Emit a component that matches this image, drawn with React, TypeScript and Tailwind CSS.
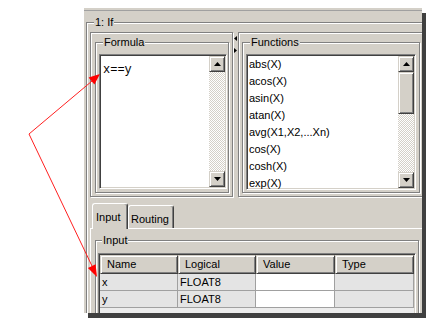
import * as React from "react";

const ETCH = "border border-[#808080] shadow-[inset_1px_1px_0_#ffffff,1px_1px_0_#ffffff]";
const SUNKEN =
  "border border-t-[#808080] border-l-[#808080] border-r-white border-b-white shadow-[inset_1px_1px_0_#404040,inset_-1px_-1px_0_#d4d0c8]";
const RAISED =
  "border border-t-[#d4d0c8] border-l-[#d4d0c8] border-r-[#404040] border-b-[#404040] shadow-[inset_1px_1px_0_#ffffff,inset_-1px_-1px_0_#808080]";
const DITHER = "bg-[image:repeating-conic-gradient(#d4d0c8_0%_25%,#ffffff_0%_50%)] bg-[length:2px_2px]";

const FUNCTIONS = ["abs(X)", "acos(X)", "asin(X)", "atan(X)", "avg(X1,X2,...Xn)", "cos(X)", "cosh(X)", "exp(X)"];

function Group({
  title,
  className = "",
  children
}: {
  title: string;
  className?: string;
  children?: React.ReactNode;
}) {
  return (
    <fieldset className={[ETCH, "min-w-0", className].join(" ")}>
      <legend className="ml-[4px] bg-[#d4d0c8] px-[1px] leading-[13px]">{title}</legend>
      {children}
    </fieldset>
  );
}

function Arrow({ dir }: { dir: "up" | "down" }) {
  return (
    <svg width="7" height="4" viewBox="0 0 7 4" aria-hidden="true">
      <polygon points={dir === "up" ? "0,4 3.5,0 7,4" : "0,0 3.5,4 7,0"} fill="#000" />
    </svg>
  );
}

function ScrollButton({ dir }: { dir: "up" | "down" }) {
  return (
    <div className={["grid h-[16px] w-[16px] shrink-0 place-items-center bg-[#d4d0c8]", RAISED].join(" ")}>
      <Arrow dir={dir} />
    </div>
  );
}

function Scrollbar({ thumb }: { thumb?: boolean }) {
  return (
    <div className="flex w-[16px] flex-col">
      <ScrollButton dir="up" />
      {thumb && <div className={["h-[42px] bg-[#d4d0c8]", RAISED].join(" ")} />}
      <div className={["flex-1", DITHER].join(" ")} />
      <ScrollButton dir="down" />
    </div>
  );
}

function Tab({ label, active }: { label: string; active?: boolean }) {
  return (
    <div
      className={[
        "relative rounded-t-[3px] border-l border-t border-r border-l-white border-t-white border-r-[#404040] bg-[#d4d0c8] shadow-[inset_-1px_0_0_#808080]",
        active ? "z-10 -mb-px h-[26px] w-[36px] pl-[3px] pt-[5px]" : "h-[23px] w-[46px] pl-[2px] pt-[5px]"
      ].join(" ")}
    >
      {label}
    </div>
  );
}

function Cell({ children, white, w }: { children?: React.ReactNode; white?: boolean; w: string }) {
  return (
    <div
      className={[
        "h-[17px] border-b border-r border-[#a0a0a0] pl-[2px] leading-[16px]",
        white ? "bg-white" : "bg-[#e4e4e4]",
        w
      ].join(" ")}
    >
      {children}
    </div>
  );
}

function Head({ children, w }: { children: React.ReactNode; w: string }) {
  return <div className={["h-[19px] bg-[#d4d0c8] pl-[6px] leading-[16px]", RAISED, w].join(" ")}>{children}</div>;
}

function RedArrows() {
  return (
    <svg className="pointer-events-none absolute left-0 top-0" width="437" height="325" aria-hidden="true">
      <path d="M29 134 L92 81 M29 134 L92 266" stroke="#ff2020" strokeWidth="1" fill="none" />
      <polygon points="100,74 94.4,84.6 88.6,77.5" fill="#ff0000" />
      <polygon points="97,277 95.6,264.3 87.9,268" fill="#ff0000" />
    </svg>
  );
}

export default function App() {
  return (
    <div className="relative h-[325px] w-[437px] overflow-hidden bg-white font-['Liberation_Sans',Arial,sans-serif] text-[11px] text-black">
      <div className="ml-[84px] mt-[8px] h-[305px] w-[338px] overflow-hidden bg-[#d4d0c8] shadow-[4px_5px_0_#404040]">
        <div className="h-[3px] border-b border-[#a0a0a0]" />
        <Group title="1: If" className="ml-[2px] mt-[5px] h-[340px] w-[360px] pl-[3px] pt-[3px]">
          <div className="flex items-start">
            {/* formula editor */}
            <div className={[ETCH, "h-[165px] w-[143px] pl-[4px] pt-[3px]"].join(" ")}>
              <Group title="Formula" className="h-[157px] w-[134px] pl-[3px] pt-[5px]">
                <div className={[SUNKEN, "flex h-[135px] w-[128px] bg-white p-[1px]"].join(" ")}>
                  <div className="flex-1 pl-[2px] pt-[7px] [font-family:'Liberation_Mono','Courier_New',monospace] text-[12px] leading-[14px]">
                    x==y
                  </div>
                  <Scrollbar />
                </div>
              </Group>
            </div>

            {/* splitter */}
            <div className="flex w-[5px] flex-col items-center pt-[4px]">
              <svg width="3" height="5" viewBox="0 0 3 5" aria-hidden="true">
                <polygon points="3,0 0,2.5 3,5" fill="#000" />
              </svg>
              <svg className="mt-[7px]" width="3" height="5" viewBox="0 0 3 5" aria-hidden="true">
                <polygon points="0,0 3,2.5 0,5" fill="#000" />
              </svg>
            </div>

            {/* function list */}
            <div className={[ETCH, "h-[165px] w-[186px] pl-[3px] pt-[3px]"].join(" ")}>
              <Group title="Functions" className="h-[157px] w-[178px] pl-[3px] pt-[5px]">
                <div className={[SUNKEN, "flex h-[136px] w-[170px] bg-white p-[1px]"].join(" ")}>
                  <ul className="flex-1">
                    {FUNCTIONS.map((f) => (
                      <li key={f} className="h-[17px] pl-[1px] leading-[17px]">
                        {f}
                      </li>
                    ))}
                  </ul>
                  <Scrollbar thumb />
                </div>
              </Group>
            </div>
          </div>

          {/* tabs */}
          <div className="mt-[6px] flex h-[25px] items-end pl-[2px]">
            <Tab label="Input" active />
            <Tab label="Routing" />
          </div>
          <div className="h-[100px] w-[340px] border-l border-t border-white pl-[4px] pt-[5px]">
            <Group title="Input" className="h-[120px] w-[324px] pl-[2px] pt-[6px]">
              <div className={[SUNKEN, "h-[70px] w-[318px] bg-[#ececec] p-[1px]"].join(" ")}>
                <div className="flex">
                  <Head w="w-[78px]">Name</Head>
                  <Head w="w-[78px]">Logical</Head>
                  <Head w="w-[79px]">Value</Head>
                  <Head w="w-[79px]">Type</Head>
                </div>
                {[
                  ["x", "FLOAT8"],
                  ["y", "FLOAT8"]
                ].map(([name, logical]) => (
                  <div key={name} className="flex">
                    <Cell w="w-[78px]">{name}</Cell>
                    <Cell w="w-[78px]">{logical}</Cell>
                    <Cell w="w-[79px]" white />
                    <Cell w="w-[79px]" />
                  </div>
                ))}
              </div>
            </Group>
          </div>
        </Group>
      </div>
      <RedArrows />
    </div>
  );
}
